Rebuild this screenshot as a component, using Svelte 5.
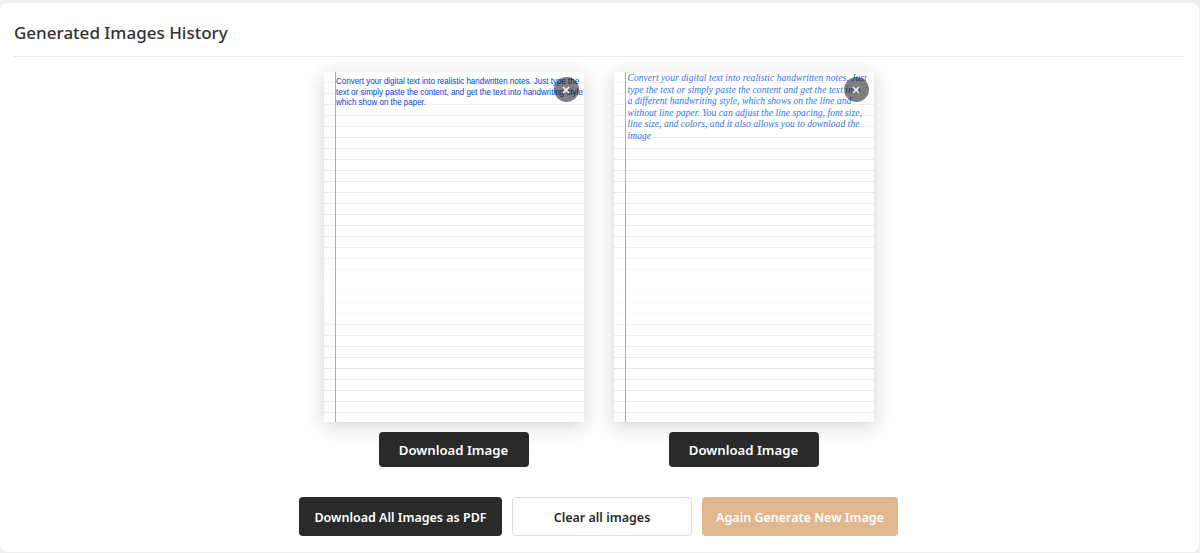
<script lang="ts">
  // the ruling on the scanned paper fades in and out down the page: [y, strength]
  const fade = [
    [0, 0.1],
    [170, 0.9],
    [236, 0.8],
    [280, 0.12],
    [310, 0.25],
    [365, 1],
    [411, 0.7]
  ];

  function shadeAt(y: number) {
    for (let i = 1; i < fade.length; i++) {
      const [y0, a] = fade[i - 1];
      const [y1, b] = fade[i];
      if (y <= y1) return a + ((b - a) * (y - y0)) / (y1 - y0);
    }
    return 0.7;
  }

  const rules = Array.from({ length: 31 }, (_, i) => shadeAt(82 + i * 11).toFixed(2));

  const pages = [
    {
      style: "print",
      lines: [
        "Convert your digital text into realistic handwritten notes. Just type the",
        "text or simply paste the content, and get the text into handwriting style",
        "which show on the paper."
      ]
    },
    {
      style: "cursive",
      lines: [
        "Convert your digital text into realistic handwritten notes. Just",
        "type the text or simply paste the content and get the text into",
        "a different handwriting style, which shows on the line and",
        "without line paper. You can adjust the line spacing, font size,",
        "line size, and colors, and it also allows you to download the",
        "image"
      ]
    }
  ];
</script>

<section class="card">
  <h2>Generated Images History</h2>

  <div class="gallery">
    {#each pages as page}
      <div class="item">
        <div class="paper">
          {#each rules as shade}
            <div class="rule" style="opacity: {shade}"></div>
          {/each}
          <div class="margin-line"></div>
          <div class="writing {page.style}">
            {#each page.lines as line}
              <div>{line}</div>
            {/each}
          </div>
          <button class="close" aria-label="Remove image">
            <svg width="8" height="8" viewBox="0 0 8 8">
              <path d="M1 1l6 6M7 1l-6 6" stroke="#fff" stroke-width="1.5" />
            </svg>
          </button>
        </div>
        <button class="btn dark single">Download Image</button>
      </div>
    {/each}
  </div>

  <div class="actions">
    <button class="btn dark pdf">Download All Images as PDF</button>
    <button class="btn outline">Clear all images</button>
    <button class="btn tan">Again Generate New Image</button>
  </div>
</section>

<style>
  :global(body) {
    background: #efefef;
    font-family: "Noto Sans", "Open Sans", sans-serif;
  }

  .card {
    box-sizing: border-box;
    height: 549px;
    margin: 3px 1px 0 0;
    padding: 0 16px 0 14px;
    background: #fff;
    border-radius: 8px;
  }

  h2 {
    margin: 0;
    padding: 18px 0 12px;
    height: 54px;
    box-sizing: border-box;
    border-bottom: 1px solid #e9e9e9;
    font-size: 17px;
    line-height: 24px;
    font-weight: 500;
    color: #333;
  }

  .gallery {
    display: flex;
    justify-content: center;
    gap: 30px;
    margin-top: 15px;
  }

  .item {
    display: flex;
    flex-direction: column;
    align-items: center;
    gap: 10px;
  }

  .paper {
    position: relative;
    width: 260px;
    height: 350px;
    overflow: hidden;
    background: #fff;
    box-shadow: 0 4px 18px rgba(0, 0, 0, 0.18);
  }

  .rule {
    height: 10px;
    border-bottom: 1px solid #e6e6e6;
  }

  .margin-line {
    position: absolute;
    top: 0;
    bottom: 0;
    left: 11px;
    width: 1px;
    background: #ee8f94;
  }

  .writing {
    position: absolute;
    top: 0;
    left: 0;
    white-space: nowrap;
  }

  .print {
    left: 12px;
    padding-top: 4px;
    font-family: "Liberation Sans", sans-serif;
    font-size: 9.5px;
    line-height: 10.7px;
    color: #0048dd;
    transform: scaleX(0.84);
    transform-origin: left top;
  }

  .cursive {
    padding: 1px 0 0 14px;
    font-family: "Liberation Serif", serif;
    font-style: italic;
    font-size: 9.5px;
    letter-spacing: 0.07px;
    line-height: 11.6px;
    color: #2f74e8;
  }

  .close {
    position: absolute;
    top: 5px;
    right: 5px;
    display: flex;
    align-items: center;
    justify-content: center;
    width: 25px;
    height: 25px;
    padding: 0;
    border: none;
    border-radius: 50%;
    background: rgba(0, 0, 0, 0.5);
  }

  .btn {
    box-sizing: border-box;
    border-radius: 4px;
    font-family: inherit;
    font-weight: 600;
    cursor: pointer;
  }

  .dark {
    border: none;
    background: #2a2a2a;
    color: #fff;
  }

  .single {
    width: 150px;
    height: 35px;
    font-size: 13.2px;
  }

  .actions {
    display: flex;
    justify-content: center;
    gap: 10px;
    margin-top: 30px;
  }

  .actions .btn {
    height: 39px;
    padding-top: 2px;
    font-size: 12.5px;
  }

  .pdf {
    width: 203px;
  }

  .outline {
    width: 180px;
    border: 1px solid #ddd;
    background: #fff;
    color: #2a2a2a;
  }

  .tan {
    width: 196px;
    border: none;
    background: #e0b78e;
    color: #fff;
  }
</style>
